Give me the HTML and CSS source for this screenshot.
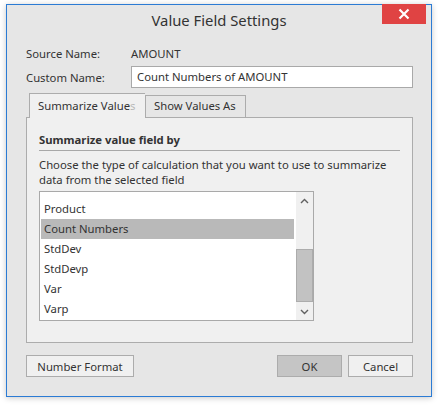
FILE: index.html
```html
<!DOCTYPE html>
<html>
<head>
<meta charset="utf-8">
<link rel="stylesheet" href="styles.css">
</head>
<body>
<div class="window">
  <div class="titlebar">
    <span class="title">Value Field Settings</span>
    <div class="close">
      <svg width="12" height="12" viewBox="0 0 12 12"><path d="M1.5 1.5 L10.5 10.5 M10.5 1.5 L1.5 10.5" stroke="#fff" stroke-width="2.2" fill="none"/></svg>
    </div>
  </div>
  <div class="content">
    <div class="row row-source">
      <span class="label">Source Name:</span>
      <span class="value">AMOUNT</span>
    </div>
    <div class="row row-custom">
      <span class="label">Custom Name:</span>
      <div class="input">Count Numbers of AMOUNT</div>
    </div>
    <div class="tabs">
      <div class="tab tab-active">Summarize Value<span class="fade">s</span></div>
      <div class="tab tab-second">Show Values As</div>
    </div>
    <div class="panel">
      <div class="heading">Summarize value field by</div>
      <div class="desc">Choose the type of calculation that you want to use to summarize data from the selected field</div>
      <div class="listbox">
        <div class="items">
          <div class="spacer"></div>
          <div class="item">Product</div>
          <div class="item selected">Count Numbers</div>
          <div class="item">StdDev</div>
          <div class="item">StdDevp</div>
          <div class="item">Var</div>
          <div class="item">Varp</div>
        </div>
        <div class="scrollbar">
          <div class="arrow">
            <svg width="9" height="6" viewBox="0 0 9 6"><path d="M1 5 L4.5 1.5 L8 5" stroke="#606060" stroke-width="1.4" fill="none"/></svg>
          </div>
          <div class="track">
            <div class="thumb"></div>
          </div>
          <div class="arrow">
            <svg width="9" height="6" viewBox="0 0 9 6"><path d="M1 1 L4.5 4.5 L8 1" stroke="#606060" stroke-width="1.4" fill="none"/></svg>
          </div>
        </div>
      </div>
    </div>
    <div class="buttons">
      <div class="btn btn-format">Number Format</div>
      <div class="spacer-flex"></div>
      <div class="btn btn-ok">OK</div>
      <div class="btn btn-cancel">Cancel</div>
    </div>
  </div>
</div>
</body>
</html>
```

FILE: styles.css
```css
* { box-sizing: border-box; }
html, body { margin: 0; padding: 0; background: #ffffff; }
body {
  font-family: "Noto Sans", "Open Sans", sans-serif;
  font-size: 11.3px;
  color: #333333;
  width: 438px;
  height: 405px;
  overflow: hidden;
}
.window {
  position: relative;
  margin: 4px 0 0 6px;
  width: 426px;
  height: 393px;
  background: #e6e6e6;
  border: 1px solid #2b7bd4;
  box-shadow: 0 1px 6px rgba(0,0,0,0.22);
}
.titlebar {
  position: relative;
  height: 30px;
  display: flex;
  align-items: center;
  justify-content: center;
}
.title {
  font-size: 14.8px;
  color: #333333;
}
.close {
  position: absolute;
  top: -1px;
  right: 5px;
  width: 44px;
  height: 20px;
  background: #e04343;
  display: flex;
  align-items: center;
  justify-content: center;
}
.content {
  padding: 8px 18px 0 19px;
  display: flex;
  flex-direction: column;
}
.row {
  display: flex;
  align-items: center;
  white-space: nowrap;
}
.row-source { height: 20px; }
.row-custom { margin-top: 3px; height: 22px; }
.label { width: 105px; }
.input {
  flex: 1;
  height: 22px;
  background: #ffffff;
  border: 1px solid #a9a9a9;
  padding: 0 0 0 5px;
  line-height: 20px;
}
.tabs {
  display: flex;
  align-items: flex-end;
  margin-top: 5px;
  padding-left: 3px;
  height: 24px;
  position: relative;
  z-index: 2;
}
.tab {
  height: 22px;
  border: 1px solid #acacac;
  border-bottom: none;
  padding: 0 8px;
  line-height: 20px;
  background: #e6e6e6;
  white-space: nowrap;
  overflow: hidden;
}
.tab-active {
  height: 25px;
  width: 116px;
  background: #f0f0f0;
  margin-bottom: -1px;
  line-height: 23px;
  padding: 0 0 0 8px;
  border-right: none;
}
.tab-second { width: 101px; }
.fade { color: #b8b8b8; }
.panel {
  height: 226px;
  background: #f0f0f0;
  border: 1px solid #acacac;
  padding: 12px 12px 0 12px;
  display: flex;
  flex-direction: column;
}
.heading {
  font-weight: bold;
  height: 21px;
  line-height: 20px;
  border-bottom: 1px solid #a8a8a8;
  white-space: nowrap;
}
.desc {
  margin-top: 6px;
  line-height: 15px;
}
.listbox {
  margin-top: 4px;
  width: 275px;
  height: 130px;
  background: #ffffff;
  border: 1px solid #a9a9a9;
  display: flex;
}
.items {
  flex: 1;
  padding: 0 2px 0 1px;
}
.spacer { height: 7px; }
.item {
  height: 20px;
  line-height: 20px;
  padding-left: 3px;
}
.selected { background: #b9b9b9; }
.scrollbar {
  width: 17px;
  display: flex;
  flex-direction: column;
  background: #f0f0f0;
}
.arrow {
  height: 17px;
  display: flex;
  align-items: center;
  justify-content: center;
}
.track {
  flex: 1;
  position: relative;
}
.thumb {
  position: absolute;
  left: 0;
  right: 0;
  top: 40px;
  height: 53px;
  background: #c2c2c2;
  border: 1px solid #acacac;
}
.buttons {
  display: flex;
  margin-top: 12px;
  gap: 6px;
}
.spacer-flex { flex: 1; }
.btn {
  height: 22px;
  border: 1px solid #acacac;
  background: #f0f0f0;
  display: flex;
  align-items: center;
  justify-content: center;
  white-space: nowrap;
}
.btn-format { width: 108px; }
.btn-ok { width: 65px; background: #c5c5c5; }
.btn-cancel { width: 65px; }
```
